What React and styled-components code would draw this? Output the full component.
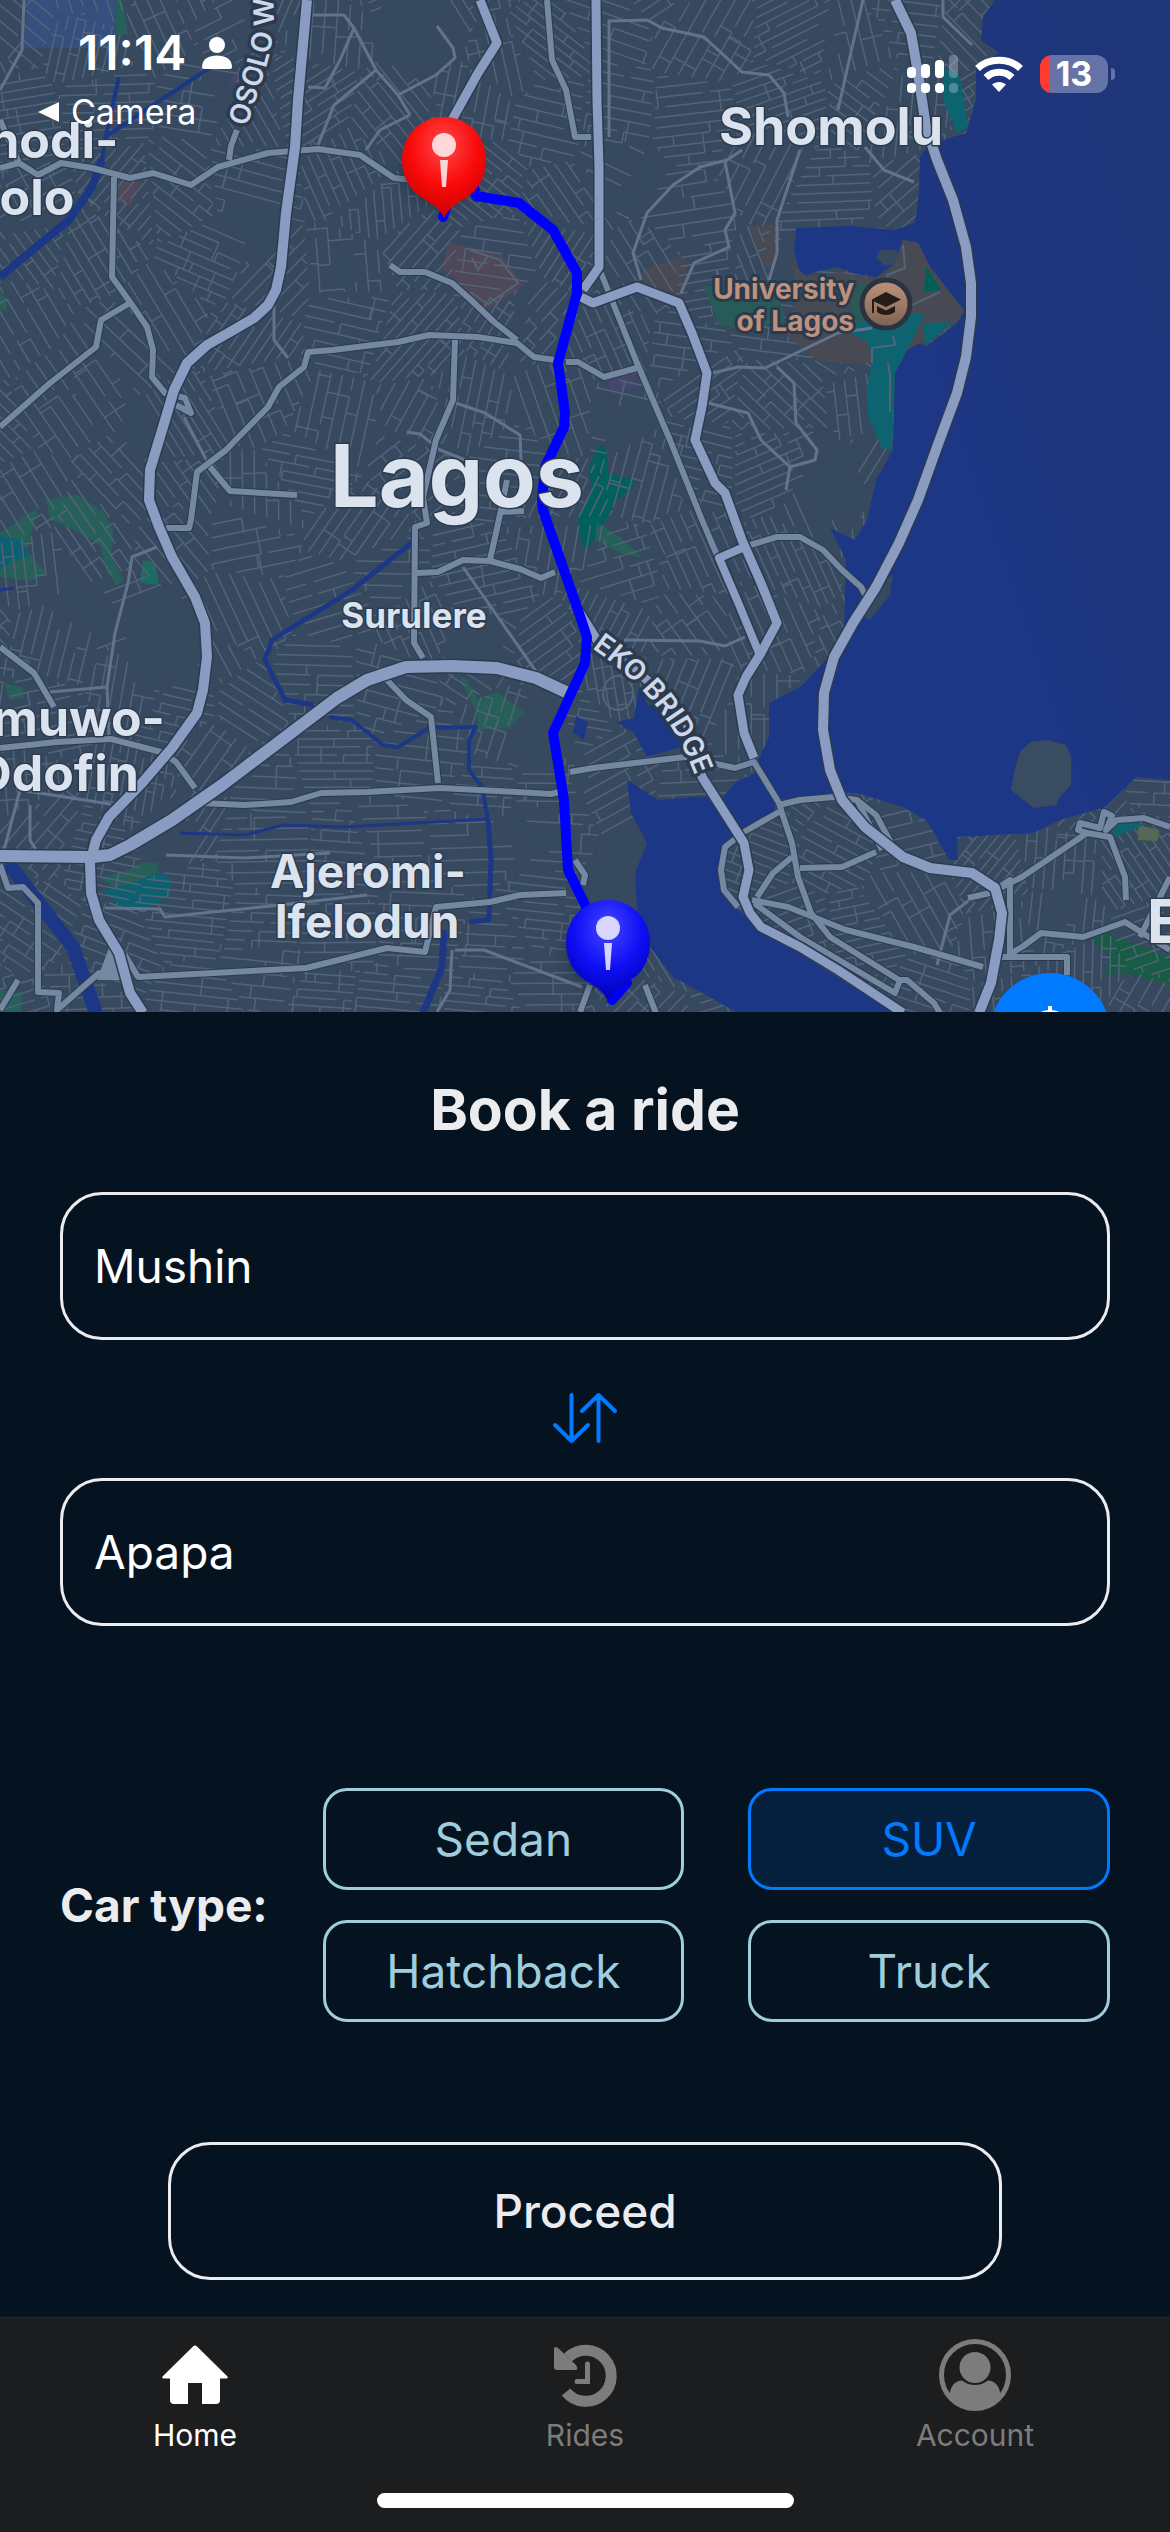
import React, { useState } from "react";
import styled, { createGlobalStyle } from "styled-components";

const color = {
  land: "#37495f",
  water: "#1d3787",
  street: "#536379",
  minor: "#63738c",
  arterial: "#7488a2",
  highway: "#8a9cc1",
  casing: "#2c3a50",
  route: "#0000ff",
  panel: "#05121f",
  line: "#ececee",
  accent: "#007aff",
  pale: "#9fcddc",
  tab: "#1c1d1f",
  muted: "#7c7c7c",
};

const GlobalStyle = createGlobalStyle`
  *, *::before, *::after { box-sizing: border-box; }
  body {
    margin: 0;
    background: ${color.panel};
    font-family: Inter, Roboto, "Liberation Sans", sans-serif;
  }
  button, input { font-family: inherit; }
`;

/* ---------- map data ---------- */

const MAP_W = 1170;
const MAP_H = 1012;

const openGround = [
  [415, 35, 45], [345, 270, 20], [255, 230, 30], [140, 430, 28], [165, 640, 50],
  [640, 185, 32], [620, 420, 26], [520, 840, 34], [545, 730, 36], [230, 100, 26],
  [170, 840, 30], [640, 880, 60], [250, 20, 22], [830, 480, 44], [70, 600, 36],
  [800, 260, 30], [820, 35, 18], [480, 640, 28], [1060, 900, 24],
];

function seeded(seed) {
  let s = seed;
  return () => {
    s = (s * 1664525 + 1013904223) % 4294967296;
    return s / 4294967296;
  };
}

// Street blocks: every cell of a jittered Voronoi grid has its own street direction.
function buildStreets() {
  const rnd = seeded(41);
  const step = 74;
  const sites = [];
  for (let gy = -1; gy * step < MAP_H + step; gy += 1) {
    for (let gx = -1; gx * step < MAP_W + step; gx += 1) {
      const x = (gx + 0.1 + rnd() * 0.8) * step;
      const y = (gy + 0.1 + rnd() * 0.8) * step;
      let angle = rnd() * Math.PI;
      if (x < 190 && y > 220 && y < 560) angle = 0.75 + rnd() * 0.3;
      if (x > 190 && x < 560 && y > 760) angle = rnd() * 0.16 - 0.05;
      if (x > 690 && x < 860 && y > 480 && y < 720) angle = 1.15;
      sites.push({ x, y, angle, gap: 8 + rnd() * 5 });
    }
  }
  let d = "";
  sites.forEach((s, i) => {
    const near = sites.filter((o, j) => j !== i && Math.hypot(o.x - s.x, o.y - s.y) < 230);
    const clip = (x, y, ux, uy, from, to) => {
      let a = from;
      let b = to;
      near.forEach((o) => {
        const nx = o.x - s.x;
        const ny = o.y - s.y;
        const c = (o.x * o.x + o.y * o.y - s.x * s.x - s.y * s.y) / 2 - 120;
        const den = nx * ux + ny * uy;
        const t = (c - nx * x - ny * y) / den;
        if (den > 0) b = Math.min(b, t);
        else a = Math.max(a, t);
      });
      if (b - a < 3) return;
      const mx = x + (ux * (a + b)) / 2;
      const my = y + (uy * (a + b)) / 2;
      if (openGround.some(([cx, cy, r]) => Math.hypot(mx - cx, my - cy) < r)) return;
      d += `M${(x + ux * a).toFixed(1)} ${(y + uy * a).toFixed(1)}L${(x + ux * b).toFixed(1)} ${(y + uy * b).toFixed(1)}`;
    };
    const ux = Math.cos(s.angle);
    const uy = Math.sin(s.angle);
    for (let k = -9; k <= 9; k += 1) {
      const px = s.x - uy * k * s.gap;
      const py = s.y + ux * k * s.gap;
      let t = -100 + rnd() * 20;
      while (t < 100) {
        const len = 22 + rnd() * 60;
        clip(px, py, ux, uy, t, t + len);
        if (rnd() < 0.75) clip(px + ux * t, py + uy * t, -uy, ux, 0, s.gap * (rnd() < 0.4 ? 2 : 1));
        t += len + (rnd() < 0.45 ? 7 : 0);
      }
    }
  });
  return d;
}

const STREETS = buildStreets();

const waters = [
  "995,0 983,17 981,40 999,53 976,67 976,100 966,133 943,140 930,143 920,157 919,190 916,217 914,223 895,230 850,226 796,228 794,250 801,277 815,272 838,267 855,274 876,277 895,263 903,240 918,243 930,267 964,310 957,323 926,347 911,337 907,350 895,373 893,450 876,480 867,520 855,540 830,528 846,560 844,627 826,660 800,687 769,703 769,737 758,760 779,800 834,793 857,793 903,807 926,820 934,833 949,860 958,860 957,837 1033,833 1060,820 1106,807 1136,777 1170,780 1170,0",
  "735,783 761,770 777,800 773,813 742,828 727,843 719,860 719,883 735,907 761,930 895,1013 738,1013 673,977 650,947 637,913 635,873 647,843 631,813 627,780 640,788 658,800 692,797 723,797",
  "639,687 648,705 668,708 680,716 688,727 681,747 647,757 634,733 616,722 634,718",
  "576,716 588,722 584,740 573,732",
];

const cityPatches = [
  ["#35507f", "27,0 115,0 115,48 24,48"],
  ["#266058", "115,0 122,0 128,34 116,35"],
  ["#266058", "46,500 77,495 104,512 113,530 111,557 124,580 116,586 106,570 100,545 70,528 50,520"],
  ["#266058", "0,533 38,507 27,550 46,573 30,581 0,577"],
  ["#0d6070", "0,536 22,540 30,556 12,561 0,570"],
  ["#1f6a62", "143,560 155,563 159,585 140,583"],
  ["#266058", "4,683 23,687 24,698 10,700"],
  ["#266058", "459,677 467,680 478,700 497,692 524,712 509,728 478,730 476,710"],
  ["#266058", "99,877 124,872 142,863 157,863 160,885 120,892"],
  ["#0d6070", "103,890 130,884 160,872 172,880 168,897 149,907 119,907"],
  ["#266058", "0,990 23,993 21,1012 0,1012"],
  ["#266058", "0,292 7,300 6,311 0,309"],
  ["#00605c", "599,445 606,447 608,473 633,480 633,488 616,500 606,520 589,547 582,547 578,520 592,492 589,467"],
  ["#266058", "597,522 620,537 643,558 620,553 595,540"],
  ["#4f4858", "448,242 501,255 524,285 488,310 442,268"],
  ["#4f4858", "117,182 142,182 130,207 117,200"],
  ["#46466c", "230,77 245,63 246,80 228,84"],
  ["#46466c", "608,380 635,373 636,387 612,393"],
  ["#484a53", "643,270 685,255 688,270 681,297 641,281"],
  ["#484a53", "746,225 777,225 775,268 764,268 750,235"],
  ["#56684f", "1138,825 1159,830 1158,841 1138,840"],
  ["#185c45", "1090,937 1106,933 1170,957 1170,985 1125,973 1106,975 1109,957"],
];

const shorePatches = [
  ["#484a53", "792,263 807,277 838,272 876,280 895,266 903,240 918,243 930,267 964,310 957,323 907,350 872,363 819,362 784,333 796,300"],
  ["#285a58", "704,285 730,293 780,300 785,322 745,330 719,325"],
  ["#285a58", "857,285 880,280 880,320 845,325"],
  ["#0d6470", "845,330 870,318 925,313 907,350 895,373 892,450 882,448 868,417 867,387 872,360 868,342"],
  ["#006058", "926,266 941,290 924,292"],
  ["#0d6470", "922,323 953,322 926,345"],
  ["#0d6470", "945,67 960,77 968,127 957,133 943,100"],
  ["#0d6470", "1113,813 1144,825 1113,838"],
];

const canals = [
  [8, "0,277 69,220 92,187 102,160"],
  [4, "102,160 105,140 119,77"],
  [4, "105,137 226,57"],
  [5, "419,537 352,590 272,640 265,660 285,700 314,705"],
  [4, "329,717 352,720 383,745 398,747 429,728 476,727 469,740 469,770 482,787 488,820"],
  [5, "488,820 491,860 489,920 469,922"],
  [3, "180,833 245,835 283,825 344,827 488,819"],
  [14, "8,863 42,907 73,947 96,1013"],
  [7, "444,930 442,967 423,1013"],
  [3, "0,590 14,588"],
];

const minorRoads = [
  "184,417 210,467", "609,137 609,21 647,20 662,28 704,37 742,72 769,75 784,93 788,117",
  "863,0 853,43 838,110", "800,150 777,220 777,253 769,280",
  "742,150 727,160 700,167 673,185 647,213 633,253 641,280",
  "725,162 735,213 725,230 729,247 694,263 681,293", "865,147 884,170 914,182",
  "943,0 943,17 972,45", "712,373 738,367 765,368 838,333 872,328",
  "777,367 794,383 796,423 817,450 815,460 790,467 761,440 748,413 708,403",
  "790,467 786,490", "157,547 132,557 128,583 115,633 107,687 50,692", "107,687 109,738",
  "624,640 700,641 725,646 745,637", "354,28 340,60 325,88 308,87", "313,15 344,15 354,28 376,70 398,95 410,115",
  "376,70 334,105 318,145", "398,95 436,75 455,58 453,48 437,26", "410,115 380,130 366,150",
  "463,567 500,620 542,680", "166,855 245,858 330,853", "105,908 160,909 165,917 280,905 367,895",
  "0,865 20,790 110,804", "30,805 30,840 36,850", "407,432 420,434 440,450 478,465", "453,402 485,413 520,435 521,460",
  "455,950 484,950 582,987", "452,950 450,990 437,1012", "24,0 22,50 0,90", "274,300 274,340 288,358",
  "937,965 950,915 972,898",
];

const arterials = [
  "0,168 19,163 38,175 61,163 92,168 130,178 153,173 191,185 218,167 268,153 318,149 360,155 394,178 413,180",
  "19,163 0,120", "114,177 112,277 130,302 147,327 153,350 152,377 165,393 185,398 191,413 176,405",
  "130,303 101,320 96,347 50,383 0,427", "237,130 231,146 229,160",
  "555,360 534,357 517,343 478,337 429,335 398,342 333,350 308,352 304,367 279,387 268,407 226,450 197,472 191,520 189,528 166,528",
  "566,362 578,362 604,377 637,368", "390,265 400,272 425,272 452,283 471,300 494,322 517,340",
  "455,340 453,400 436,440 423,497 427,523 415,527 414,643 423,658",
  "417,573 438,572 463,560 490,561 520,569 541,578 555,572", "507,480 501,510 490,560", "501,512 524,511",
  "210,467 230,491 297,495", "547,0 552,60 566,90 575,137 591,137",
  "387,680 406,700 431,717 438,783",
  "201,803 245,805 291,802 321,793 367,792 440,788 498,791 551,794 559,792",
  "0,748 57,742 111,739 161,752 176,762 195,788", "0,647 34,673 54,707",
  "0,865 8,888 23,887 38,903 38,992 59,993 57,1010 99,973 125,975",
  "125,955 138,977 306,968 387,948 425,952 436,907 490,902 520,895 566,893",
  "601,273 637,363 670,440 702,520 719,560", "570,772 593,768 685,757 735,768 754,762 779,803",
  "779,812 744,832 725,847 721,870 724,890 738,907", "779,805 800,800 834,797 857,800 876,815 895,850",
  "857,800 882,850", "779,803 782,813 792,843 798,877 811,913 830,937 899,980 907,980 934,1003 940,1013",
  "752,900 788,907 846,930 914,947 983,967", "754,903 800,937 895,993 900,980",
  "800,868 842,867 876,852", "757,897 773,873 792,857", "750,545 777,537 800,537 823,550 842,570 861,587 868,600",
  "968,898 990,893 1022,877 1087,833 1110,837 1125,877 1126,900",
  "1087,833 1078,830 1080,823 1100,828 1104,812 1112,816 1106,830 1117,820 1144,818 1170,827",
  "1002,957 1067,957 1067,975", "1008,955 1022,947 1041,933 1083,937 1125,922 1170,950", "1170,877 1140,937",
  "645,985 656,1013", "0,1010 12,990 18,980", "990,893 1010,880 1010,960", "583,636 600,650",
  "575,860 585,875 583,885", "590,985 580,1012",
];

const highways = [
  [10, "307,0 298,100 295,147 286,213 281,267 276,290 268,305 254,318 230,332 207,345 187,363 174,390 163,427 150,470 149,500 159,527 172,557 195,597 205,623 207,657 203,690 197,713 172,748 142,783 109,817 96,840 90,863 91,893 99,920 119,953 130,993 143,1013"],
  [12, "0,856 92,857 110,855 130,845 172,820 222,785 275,745 337,698 367,680 406,667 452,666 497,668 536,678 566,692"],
  [9, "480,0 497,43 478,73 452,120"],
  [9, "596,0 597,100 599,167 599,267 583,290"],
  [9, "581,297 593,303 637,287 679,303 692,333 707,373 702,407 695,440 715,483 725,493 742,540 761,583 777,623 761,653 746,677 738,695 744,733 754,758"],
  [8, "742,548 719,558 740,607 759,653"],
  [10, "895,0 911,33 918,73 926,127 937,160 953,200 966,247 971,283 971,317 966,357 957,393 937,447 918,500 899,543 876,587 853,623 834,657 824,693 823,730 830,770 842,800 865,827 903,857 930,868 972,873 995,888 1002,913 999,940 991,983 979,1013"],
  [9, "578,610 597,640 647,680 685,717 702,777 723,810 744,843 749,870 743,897 750,913 761,927 800,947 838,970 903,1013"],
];

const routePoints =
  "443,217 450,195 474,187 476,196 519,203 553,230 577,273 577,293 558,363 565,413 564,427 545,467 542,500 543,510 551,533 578,610 587,637 585,663 559,720 553,733 564,800 568,870 589,913 610,950 627,983 612,1000";

/* ---------- map drawing ---------- */

const MapSection = styled.section`
  position: relative;
  flex: 1 1 0;
  min-height: 640px;
  overflow: hidden;
  background: ${color.land};
`;

const MapCanvas = styled.svg`
  position: absolute;
  inset: 0;
  width: 100%;
  height: 100%;
  display: block;
`;

const PlaceName = styled.text`
  font-family: Inter, Roboto, "Liberation Sans", sans-serif;
  font-weight: ${(p) => p.$weight || 700};
  font-size: ${(p) => p.$size}px;
  fill: ${(p) => p.$tone || "#dbe4ee"};
  stroke: #2c3a4e;
  stroke-width: ${(p) => p.$halo || 3}px;
  stroke-linejoin: round;
  paint-order: stroke;
  text-anchor: ${(p) => p.$anchor || "middle"};
`;

function Pin({ x, y, fill, glow, edge }) {
  const id = `pin-${x}`;
  return (
    <g transform={`translate(${x} ${y})`}>
      <defs>
        <radialGradient id={id} cx="0.5" cy="0.28" r="0.72">
          <stop offset="0" stopColor={glow} />
          <stop offset="0.55" stopColor={fill} />
          <stop offset="1" stopColor={edge} />
        </radialGradient>
        <filter id={`${id}-shadow`} x="-50%" y="-50%" width="200%" height="200%">
          <feGaussianBlur stdDeviation="6" />
        </filter>
      </defs>
      <circle cx="-4" cy="8" r="38" fill="#16202f" opacity="0.5" filter={`url(#${id}-shadow)`} />
      <path
        d="M0 -43 C24 -43 42 -24 42 0 C42 17 34 31 20 39 C9 45 4 50 0 58 C-4 50 -9 45 -20 39 C-34 31 -42 17 -42 0 C-42 -24 -24 -43 0 -43Z"
        fill={`url(#${id})`}
      />
      <circle cx="0" cy="-15" r="12" fill="#fff" opacity="0.8" />
      <path d="M-4 0H4L2 27H-2Z" fill="#fff" opacity="0.8" />
    </g>
  );
}

function Patches({ items }) {
  return items.map(([fill, points]) => <polygon key={points} points={points} fill={fill} />);
}

function CityMap() {
  return (
    <MapCanvas viewBox={`0 0 ${MAP_W} ${MAP_H}`} preserveAspectRatio="xMidYMid slice" role="img" aria-label="Map of Lagos with the route from Mushin to Apapa">
      <defs>
        <linearGradient id="lagoon" gradientUnits="userSpaceOnUse" x1="880" y1="300" x2="1170" y2="200">
          <stop offset="0" stopColor="#1d3787" />
          <stop offset="0.4" stopColor="#1d367e" />
          <stop offset="1" stopColor="#1e3579" />
        </linearGradient>
        <linearGradient id="campus" x1="0" y1="0" x2="0" y2="1">
          <stop offset="0" stopColor="#c0937c" />
          <stop offset="1" stopColor="#7d6152" />
        </linearGradient>
        <path id="eko" d="M592 648C640 682 684 725 704 805" />
        <path id="osolo" d="M247 127L258 92C268 62 276 40 273 0L270 -60" />
      </defs>
      <rect width={MAP_W} height={MAP_H} fill={color.land} />
      <Patches items={cityPatches} />
      <path d={STREETS} stroke={color.street} strokeWidth="1.5" fill="none" />
      <g fill="url(#lagoon)">
        {waters.map((points) => (
          <polygon key={points} points={points} />
        ))}
      </g>
      <g fill="none" stroke={color.water} strokeLinejoin="round">
        {canals.map(([w, points]) => (
          <polyline key={points} points={points} strokeWidth={w} />
        ))}
      </g>
      <path d="M1030 742L1048 740L1066 745L1071 757L1071 785L1060 797L1056 805L1034 808L1021 798L1011 790L1015 768L1020 752Z" fill="#3a4c61" />
      <path d="M880 250L896 250L902 262L885 266L876 258Z" fill={color.land} />
      <polygon points="893,575 890,595 870,620 858,612 876,585" fill={color.land} />
      <Patches items={shorePatches} />
      <g fill="none" stroke={color.street} strokeWidth="2">
        <path d="M872 318L910 306L940 292M887 275L905 268L903 245M887 275L893 290M872 363V348L895 345L893 336M888 363L890 375V412" />
        <path d="M470 250L500 260L518 283L488 304L470 292M472 258L478 270L488 256" />
      </g>
      <g fill="none" stroke={color.minor} strokeWidth="3" strokeLinejoin="round">
        {minorRoads.map((points) => (
          <polyline key={points} points={points} />
        ))}
      </g>
      <ellipse cx="618" cy="693" rx="15" ry="17" fill="none" stroke={color.street} strokeWidth="2" />
      <g fill="none" stroke={color.casing} strokeWidth="8" strokeLinejoin="round">
        {arterials.map((points) => (
          <polyline key={points} points={points} />
        ))}
      </g>
      <g fill="none" stroke={color.arterial} strokeWidth="6" strokeLinejoin="round">
        {arterials.map((points) => (
          <polyline key={points} points={points} />
        ))}
      </g>
      <polygon points="110,945 122,955 120,980 97,980" fill={color.arterial} />
      <g fill="none" stroke={color.casing} strokeLinejoin="round">
        {highways.map(([w, points]) => (
          <polyline key={points} points={points} strokeWidth={w + 3} />
        ))}
      </g>
      <g fill="none" stroke={color.highway} strokeLinejoin="round">
        {highways.map(([w, points]) => (
          <polyline key={points} points={points} strokeWidth={w} />
        ))}
      </g>
      <polyline points={routePoints} fill="none" stroke={color.route} strokeWidth="10" strokeLinejoin="round" strokeLinecap="round" />

      <PlaceName x="20" y="158" $size={50}>Oshodi-</PlaceName>
      <PlaceName x="16" y="215" $size={50}>Isolo</PlaceName>
      <PlaceName x="831" y="145" $size={52}>Shomolu</PlaceName>
      <PlaceName x="457" y="507" $size={86}>Lagos</PlaceName>
      <PlaceName x="414" y="628" $size={35}>Surulere</PlaceName>
      <PlaceName x="60" y="736" $size={50}>Amuwo-</PlaceName>
      <PlaceName x="56" y="791" $size={50}>Odofin</PlaceName>
      <PlaceName x="368" y="888" $size={46}>Ajeromi-</PlaceName>
      <PlaceName x="367" y="938" $size={46}>Ifelodun</PlaceName>
      <PlaceName x="1147" y="943" $size={60} $anchor="start">E</PlaceName>
      <PlaceName x="854" y="299" $size={28} $anchor="end" $tone="#bd917b" $halo={6}>University</PlaceName>
      <PlaceName x="854" y="331" $size={28} $anchor="end" $tone="#bd917b" $halo={6}>of Lagos</PlaceName>
      <PlaceName $size={28} $weight={600} $halo={7} $anchor="start" $tone="#cdd8ea">
        <textPath href="#eko">EKO BRIDGE</textPath>
      </PlaceName>
      <PlaceName $size={28} $weight={600} $halo={7} $anchor="start" $tone="#cdd8ea">
        <textPath href="#osolo">OSOLO W</textPath>
      </PlaceName>

      <circle cx="886" cy="304" r="24" fill="url(#campus)" stroke="#2c3340" strokeWidth="5" />
      <path d="M886 292L901 299.500L886 307L874 301.500V313H872V299.500Z" fill="#251c18" />
      <path d="M877 306L886 310.500L895 306V312C890 316 882 316 877 312Z" fill="#251c18" />

      <Pin x={444} y={160} fill="#fa0a0a" glow="#ff4a4a" edge="#cc0000" />
      <Pin x={608} y={943} fill="#0f0ff5" glow="#4747ff" edge="#0000b4" />
    </MapCanvas>
  );
}

const LocateButton = styled.button`
  position: absolute;
  right: 60px;
  bottom: -81px;
  width: 120px;
  height: 120px;
  padding: 0;
  border: 0;
  border-radius: 50%;
  background: ${color.accent};
  color: #fff;
  display: grid;
  place-items: center;
`;

/* ---------- status bar ---------- */

const StatusBar = styled.header`
  position: absolute;
  inset: 0 0 auto 0;
  display: flex;
  justify-content: space-between;
  align-items: flex-start;
  padding: 32px 55px 0 38px;
  color: #fff;
`;

const StatusLeft = styled.div`
  display: flex;
  flex-direction: column;
  align-items: flex-start;
  gap: 18px;
`;

const Clock = styled.div`
  display: flex;
  align-items: center;
  gap: 16px;
  padding-left: 40px;
  font-size: 48px;
  font-weight: 600;
  line-height: 42px;
`;

const BackLink = styled.button`
  display: flex;
  align-items: center;
  gap: 12px;
  padding: 0;
  border: 0;
  background: none;
  color: inherit;
  font-size: 34px;
  font-weight: 400;
  line-height: 40px;
`;

const StatusRight = styled.div`
  display: flex;
  align-items: center;
  gap: 17px;
  padding-top: 23px;
`;

const Battery = styled.div`
  display: flex;
  align-items: center;
  gap: 3px;
`;

const BatteryBody = styled.span`
  display: block;
  width: 68px;
  height: 38px;
  border-radius: 12px;
  background: linear-gradient(90deg, #ff3b30 9px, #6573a6 9px);
  text-align: center;
  font-size: 34px;
  font-weight: 700;
  line-height: 38px;
`;

const BatteryTip = styled.span`
  width: 4px;
  height: 12px;
  border-radius: 0 6px 6px 0;
  background: #6573a6;
`;

function Signal() {
  const cols = [[0, 12], [14, 9], [28, 5], [42, 0]];
  return (
    <svg width="51" height="38" viewBox="0 0 51 38" aria-hidden="true">
      {cols.map(([x, y], i) => (
        <g key={x} fill="#fff" opacity={i === 3 ? 0.25 : 1}>
          <rect x={x} y={y} width="9" height={23 - y} rx="4" />
          <rect x={x} y="28" width="9" height="10" rx="4" />
        </g>
      ))}
    </svg>
  );
}

function Wifi() {
  return (
    <svg width="48" height="36" viewBox="0 0 48 36" aria-hidden="true">
      <g fill="none" stroke="#fff" strokeWidth="7">
        <path d="M2.500 12.500C14 1.500 34 1.500 45.500 12.500" />
        <path d="M11 21.500C18 14.500 30 14.500 37 21.500" />
      </g>
      <path d="M24 36L17 28.500C21 25 27 25 31 28.500Z" fill="#fff" />
    </svg>
  );
}

/* ---------- booking panel ---------- */

const Screen = styled.main`
  display: flex;
  flex-direction: column;
  min-height: 100vh;
`;

const Panel = styled.form`
  display: flex;
  flex-direction: column;
  padding: 62px 60px 37px;
  background: ${color.panel};
`;

const Title = styled.h1`
  margin: 0 0 46px;
  text-align: center;
  color: ${color.line};
  font-size: 57px;
  font-weight: 700;
  line-height: 72px;
`;

const HiddenLabel = styled.label`
  position: absolute;
  width: 1px;
  height: 1px;
  overflow: hidden;
  clip-path: inset(50%);
`;

const PlaceInput = styled.input`
  width: 100%;
  height: 148px;
  padding: 0 31px;
  border: 3px solid ${color.line};
  border-radius: 42px;
  background: transparent;
  color: #fff;
  font-size: 46px;
  outline: none;
`;

const SwapButton = styled.button`
  align-self: center;
  display: grid;
  place-items: center;
  height: 138px;
  padding: 18px 20px 0;
  border: 0;
  background: none;
  color: ${color.accent};
`;

const CarRow = styled.div`
  display: flex;
  align-items: center;
  justify-content: space-between;
  gap: 40px;
  margin-top: 162px;
`;

const CarLabel = styled.h2`
  margin: 0;
  color: ${color.line};
  font-size: 46px;
  font-weight: 700;
  line-height: 56px;
  white-space: nowrap;
`;

const CarGrid = styled.div`
  display: grid;
  grid-template-columns: 1fr 1fr;
  gap: 30px 64px;
  width: 75%;
`;

const CarButton = styled.button`
  height: 102px;
  padding: 0;
  border: 3px solid ${(p) => (p.$active ? color.accent : color.pale)};
  border-radius: 24px;
  background: ${(p) => (p.$active ? "#05203c" : "transparent")};
  color: ${(p) => (p.$active ? color.accent : color.pale)};
  font-size: 46px;
`;

const ProceedButton = styled.button`
  align-self: center;
  width: 834px;
  max-width: 100%;
  height: 138px;
  margin-top: 120px;
  border: 3px solid ${color.line};
  border-radius: 42px;
  background: transparent;
  color: ${color.line};
  font-size: 46px;
  font-weight: 500;
`;

/* ---------- tab bar ---------- */

const TabBar = styled.nav`
  display: flex;
  flex-direction: column;
  align-items: center;
  gap: 40px;
  padding: 21px 0 24px;
  border-top: 1px solid #27292c;
  background: ${color.tab};
`;

const Tabs = styled.div`
  display: grid;
  grid-template-columns: repeat(3, 1fr);
  width: 100%;
`;

const Tab = styled.a`
  display: flex;
  flex-direction: column;
  align-items: center;
  gap: 6px;
  color: ${(p) => (p.$active ? "#fff" : color.muted)};
  font-size: 30px;
  line-height: 36px;
  text-decoration: none;
`;

const HomeIndicator = styled.div`
  width: 417px;
  height: 15px;
  border-radius: 8px;
  background: #fff;
`;

const HomeIcon = () => (
  <svg width="72" height="72" viewBox="0 0 72 72" fill="currentColor" aria-hidden="true">
    <path d="M36 6.500Q37 6.500 38 7.500L68 37Q70 39.500 67 39.500H61V61Q61 65 57 65H43V44H29V65H15Q11 65 11 61V39.500H5Q2 39.500 4 37L34 7.500Q35 6.500 36 6.500Z" />
  </svg>
);

const RidesIcon = () => (
  <svg width="72" height="72" viewBox="0 0 72 72" aria-hidden="true">
    <path d="M19 18.500A25.500 25.500 0 1 1 17 53" fill="none" stroke="currentColor" strokeWidth="11" />
    <path d="M5 11Q5 6 9 9L27 26Q30 31 26 31H8Q5 31 5 28Z" fill="currentColor" />
    <path d="M38.500 25V42.500H28" fill="none" stroke="currentColor" strokeWidth="5" strokeLinecap="round" />
  </svg>
);

const AccountIcon = () => (
  <svg width="72" height="72" viewBox="0 0 72 72" aria-hidden="true">
    <circle cx="36" cy="36" r="33.500" fill="none" stroke="currentColor" strokeWidth="5" />
    <circle cx="36" cy="28.500" r="15.500" fill="currentColor" />
    <path d="M11 58C10 48 16 41.500 23 41.500C31 47.500 41 47.500 49 41.500C56 41.500 62 48 61 58C47 73 25 73 11 58Z" fill="currentColor" />
  </svg>
);

const carTypes = ["Sedan", "SUV", "Hatchback", "Truck"];
const tabs = [
  ["Home", HomeIcon],
  ["Rides", RidesIcon],
  ["Account", AccountIcon],
];

export default function App() {
  const [from, setFrom] = useState("Mushin");
  const [to, setTo] = useState("Apapa");
  const [car, setCar] = useState("SUV");
  const [tab, setTab] = useState("Home");

  const swap = () => {
    setFrom(to);
    setTo(from);
  };

  return (
    <Screen>
      <GlobalStyle />
      <MapSection>
        <CityMap />
        <StatusBar>
          <StatusLeft>
            <Clock>
              11:14
              <svg width="30" height="32" viewBox="0 0 30 32" fill="#fff" aria-hidden="true">
                <circle cx="15" cy="8" r="8" />
                <path d="M0 30C0 22 7 18.500 15 18.500S30 22 30 30Q30 32 28 32H2Q0 32 0 30Z" />
              </svg>
            </Clock>
            <BackLink type="button">
              <svg width="21" height="20" viewBox="0 0 21 20" fill="#fff" aria-hidden="true">
                <path d="M0 10L21 0V20Z" />
              </svg>
              Camera
            </BackLink>
          </StatusLeft>
          <StatusRight>
            <Signal />
            <Wifi />
            <Battery>
              <BatteryBody>13</BatteryBody>
              <BatteryTip />
            </Battery>
          </StatusRight>
        </StatusBar>
        <LocateButton type="button" aria-label="Locate me">
          <svg width="56" height="56" viewBox="0 0 56 56" fill="none" stroke="currentColor" strokeWidth="4" aria-hidden="true">
            <circle cx="28" cy="28" r="21" />
            <path d="M28 1V14M28 42V55M1 28H14M42 28H55" />
          </svg>
        </LocateButton>
      </MapSection>

      <Panel onSubmit={(e) => e.preventDefault()}>
        <Title>Book a ride</Title>
        <HiddenLabel htmlFor="pickup">Pick-up</HiddenLabel>
        <PlaceInput id="pickup" value={from} onChange={(e) => setFrom(e.target.value)} />
        <SwapButton type="button" aria-label="Swap places" onClick={swap}>
          <svg width="66" height="52" viewBox="0 0 66 52" fill="none" stroke="currentColor" strokeWidth="4" strokeLinecap="round" strokeLinejoin="round" aria-hidden="true">
            <path d="M19.500 3V49M3 33L19.500 49L36 33" />
            <path d="M46.500 49V3M30 19L46.500 3L63 19" />
          </svg>
        </SwapButton>
        <HiddenLabel htmlFor="dropoff">Drop-off</HiddenLabel>
        <PlaceInput id="dropoff" value={to} onChange={(e) => setTo(e.target.value)} />

        <CarRow role="group" aria-labelledby="car-type">
          <CarLabel id="car-type">Car type:</CarLabel>
          <CarGrid>
            {carTypes.map((name) => (
              <CarButton key={name} type="button" $active={name === car} aria-pressed={name === car} onClick={() => setCar(name)}>
                {name}
              </CarButton>
            ))}
          </CarGrid>
        </CarRow>

        <ProceedButton type="submit">Proceed</ProceedButton>
      </Panel>

      <TabBar>
        <Tabs>
          {tabs.map(([name, Icon]) => (
            <Tab key={name} href={`#${name.toLowerCase()}`} $active={name === tab} onClick={() => setTab(name)}>
              <Icon />
              {name}
            </Tab>
          ))}
        </Tabs>
        <HomeIndicator />
      </TabBar>
    </Screen>
  );
}
